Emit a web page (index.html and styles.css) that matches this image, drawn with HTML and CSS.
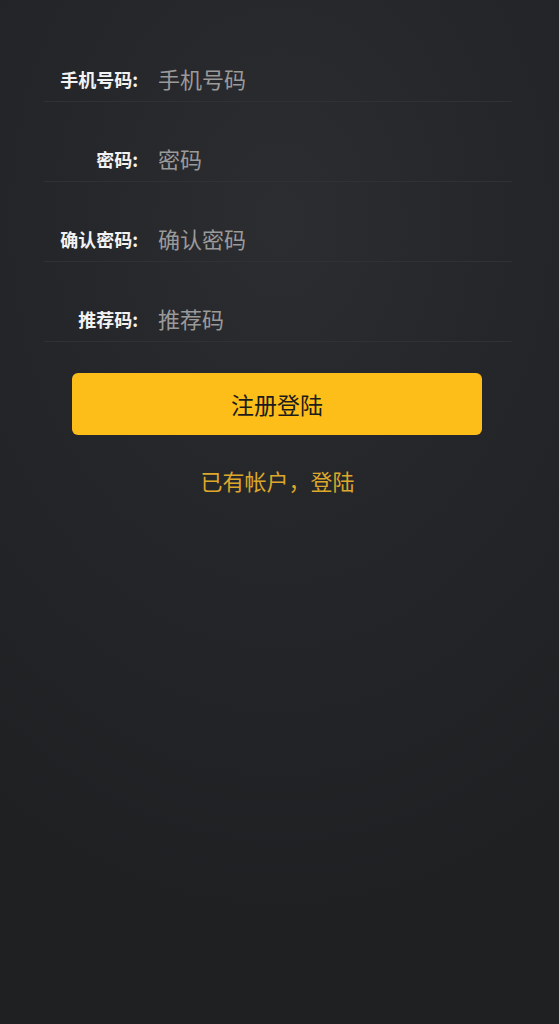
FILE: index.html
```html
<!DOCTYPE html>
<html lang="zh">
<head>
<meta charset="utf-8">
<title>注册</title>
<link rel="stylesheet" href="styles.css">
</head>
<body>
<main class="page">
  <form class="form">
    <div class="row">
      <label class="label">手机号码:</label>
      <span class="input">手机号码</span>
    </div>
    <div class="row">
      <label class="label">密码:</label>
      <span class="input">密码</span>
    </div>
    <div class="row">
      <label class="label">确认密码:</label>
      <span class="input">确认密码</span>
    </div>
    <div class="row">
      <label class="label">推荐码:</label>
      <span class="input">推荐码</span>
    </div>
  </form>
  <button class="btn" type="button">注册登陆</button>
  <a class="link">已有帐户，登陆</a>
</main>
</body>
</html>
```

FILE: styles.css
```css
html, body {
  margin: 0;
  padding: 0;
  height: 100%;
}
body {
  background: radial-gradient(ellipse 520px 700px at 280px 220px, #2c2d30 0%, #252629 45%, #1f2022 100%);
  font-family: "Noto Sans CJK SC", "Noto Sans", sans-serif;
  min-height: 1024px;
}
.page {
  display: flex;
  flex-direction: column;
  padding-top: 22px;
}
.form {
  display: flex;
  flex-direction: column;
  margin: 0 47px 0 44px;
}
.row {
  height: 79px;
  border-bottom: 1px solid #303134;
  display: flex;
  align-items: flex-end;
}
.label {
  width: 94px;
  text-align: right;
  color: #f2f2f2;
  font-weight: bold;
  font-size: 18px;
  line-height: 44px;
  letter-spacing: 0;
}
.input {
  margin-left: 20px;
  color: #9a9a9b;
  font-size: 22px;
  line-height: 46px;
}
.btn {
  margin: 31px 77px 0 72px;
  height: 62px;
  border: none;
  border-radius: 6px;
  background: #fdbe19;
  color: #1c1c1c;
  font-family: "Noto Sans CJK SC", "Noto Sans", sans-serif;
  font-size: 23px;
  padding: 0;
}
.link {
  margin-top: 29px;
  align-self: center;
  margin-right: 4px;
  color: #dca72a;
  font-size: 22px;
  line-height: 32px;
}
```
